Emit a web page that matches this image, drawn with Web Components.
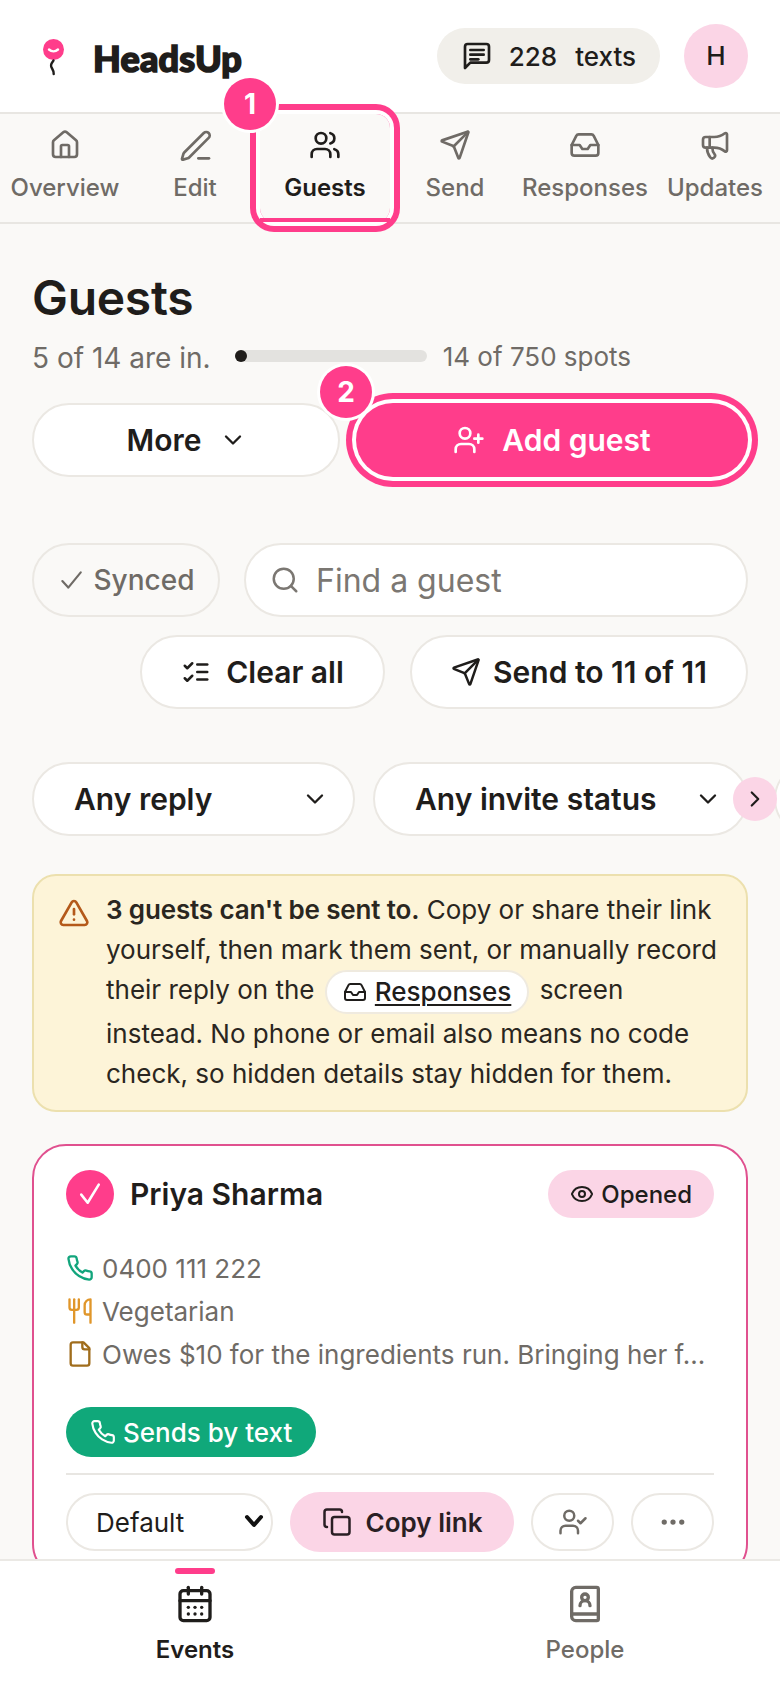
<!DOCTYPE html>
<html lang="en">
<head>
<meta charset="utf-8">
<title>HeadsUp Guests</title>
<style>
html,body{margin:0;padding:0;background:#faf9f7;}
body{font-family:Inter,"Liberation Sans",sans-serif;color:#1f1d1b;-webkit-font-smoothing:antialiased;}
</style>
</head>
<body>
<hu-app>
  <hu-header slot="top" texts="228" initial="H"></hu-header>
  <hu-tabs slot="top">
    <hu-tab icon="house">Overview</hu-tab>
    <hu-tab icon="pen">Edit</hu-tab>
    <hu-tab icon="users" active step="1">Guests</hu-tab>
    <hu-tab icon="send">Send</hu-tab>
    <hu-tab icon="inbox">Responses</hu-tab>
    <hu-tab icon="megaphone">Updates</hu-tab>
  </hu-tabs>

  <hu-summary title="Guests" in="5 of 14 are in." spots="14 of 750 spots"></hu-summary>

  <hu-row class="actions">
    <hu-button style="width:308px;padding-left:2px" trail="chevron-down">More</hu-button>
    <hu-button variant="primary" style="width:392px;gap:17px" icon="user-plus" step="2">Add guest</hu-button>
  </hu-row>

  <hu-row class="tools">
    <hu-button variant="ghost" style="width:188px" icon="tick2">Synced</hu-button>
    <hu-search style="width:504px">Find a guest</hu-search>
  </hu-row>
  <hu-row class="bulk">
    <hu-button style="width:245px;gap:15px" icon="list-checks">Clear all</hu-button>
    <hu-button style="width:338px" icon="send">Send to 11 of 11</hu-button>
  </hu-row>

  <hu-filters>
    <hu-filter style="width:323px">Any reply</hu-filter>
    <hu-filter style="width:375px">Any invite status</hu-filter>
    <hu-filter class="next" style="width:240px" aria-hidden="true"></hu-filter>
  </hu-filters>

  <hu-alert><b>3 guests can't be sent to.</b> <span>Copy or share their link</span> <span>yourself, then mark them sent, or manually record</span> <span>their reply on the</span> <hu-link icon="inbox">Responses</hu-link> <span>screen</span> <span>instead. No phone or email also means no code</span> <span>check, so hidden details stay hidden for them.</span></hu-alert>

  <hu-guest-card name="Priya Sharma" status="Opened">
    <hu-detail icon="phone" color="#12a57c">0400 111 222</hu-detail>
    <hu-detail icon="utensils" color="#e0962a">Vegetarian</hu-detail>
    <hu-detail icon="file" color="#a06d1c">Owes $10 for the ingredients run. Bringing her f...</hu-detail>
  </hu-guest-card>

  <hu-bottom-nav slot="bottom">
    <hu-nav-item icon="calendar" active>Events</hu-nav-item>
    <hu-nav-item icon="book">People</hu-nav-item>
  </hu-bottom-nav>
</hu-app>

<script>
const ICONS={
house:'<path d="M15 21v-8a1 1 0 0 0-1-1h-4a1 1 0 0 0-1 1v8"/><path d="M3 10a2 2 0 0 1 .709-1.528l7-5.999a2 2 0 0 1 2.582 0l7 5.999A2 2 0 0 1 21 10v9a2 2 0 0 1-2 2H5a2 2 0 0 1-2-2z"/>',
pen:'<path d="M14.5 22h8"/><path transform="translate(-1.4 -1.4) scale(1.22)" stroke-width="1.65" d="M16.376 3.622a1 1 0 0 1 3.002 3.002L7.368 18.635a2 2 0 0 1-.855.506l-2.872.838a.5.5 0 0 1-.62-.62l.838-2.872a2 2 0 0 1 .506-.854z"/>',
users:'<path d="M16 21v-2a4 4 0 0 0-4-4H6a4 4 0 0 0-4 4v2"/><circle cx="9" cy="7" r="4"/><path d="M22 21v-2a4 4 0 0 0-3-3.87"/><path d="M16 3.13a4 4 0 0 1 0 7.75"/>',
send:'<path d="M14.536 21.686a.5.5 0 0 0 .937-.024l6.5-19a.496.496 0 0 0-.635-.635l-19 6.5a.5.5 0 0 0-.024.937l7.93 3.18a2 2 0 0 1 1.112 1.11z"/><path d="m21.854 2.147-10.94 10.939"/>',
inbox:'<polyline points="22 12 16 12 14 15 10 15 8 12 2 12"/><path d="M5.45 5.11 2 12v6a2 2 0 0 0 2 2h16a2 2 0 0 0 2-2v-6l-3.45-6.89A2 2 0 0 0 16.76 4H7.24a2 2 0 0 0-1.79 1.11z"/>',
megaphone:'<path d="M11 6a13 13 0 0 0 8.4-2.8A1 1 0 0 1 21 4v12a1 1 0 0 1-1.6.8A13 13 0 0 0 11 14H5a2 2 0 0 1-2-2V8a2 2 0 0 1 2-2z"/><path d="M6 14a12 12 0 0 0 2.4 7.2 2 2 0 0 0 3.2-2.4A8 8 0 0 1 10 14"/><path d="M8 6v8"/>',
message:'<path d="M21 15a2 2 0 0 1-2 2H7l-4 4V5a2 2 0 0 1 2-2h14a2 2 0 0 1 2 2z"/><path d="M7 7.5h10"/><path d="M7 11h10"/><path d="M7 14.5h6"/>',
'chevron-down':'<path d="m6 9 6 6 6-6"/>',
'chevron-right':'<path d="m9 18 6-6-6-6"/>',
tick:'<path d="M4.5 12.5 10 19.5 19.5 4"/>',
tick2:'<path d="M21 5 9.5 19 4 13"/>',
search:'<path d="m21 21-4.34-4.34"/><circle cx="11" cy="11" r="8"/>',
'list-checks':'<path d="m3 17 2 2 4-4"/><path d="m3 7 2 2 4-4"/><path d="M13 6h8"/><path d="M13 12h8"/><path d="M13 18h8"/>',
'user-plus':'<path d="M16 21v-2a4 4 0 0 0-4-4H6a4 4 0 0 0-4 4v2"/><circle cx="9" cy="7" r="4"/><line x1="19" x2="19" y1="8" y2="14"/><line x1="22" x2="16" y1="11" y2="11"/>',
'user-check':'<path d="M16 21v-2a4 4 0 0 0-4-4H6a4 4 0 0 0-4 4v2"/><circle cx="9" cy="7" r="4"/><polyline points="16 11 18 13 22 9"/>',
alert:'<path d="m21.73 18-8-14a2 2 0 0 0-3.48 0l-8 14A2 2 0 0 0 4 21h16a2 2 0 0 0 1.73-3"/><path d="M12 9v4"/><path d="M12 17h.01"/>',
eye:'<path d="M2.062 12.348a1 1 0 0 1 0-.696 10.75 10.75 0 0 1 19.876 0 1 1 0 0 1 0 .696 10.75 10.75 0 0 1-19.876 0"/><circle cx="12" cy="12" r="3"/>',
phone:'<path d="M22 16.92v3a2 2 0 0 1-2.18 2 19.79 19.79 0 0 1-8.63-3.07 19.5 19.5 0 0 1-6-6 19.79 19.79 0 0 1-3.07-8.67A2 2 0 0 1 4.11 2h3a2 2 0 0 1 2 1.72 12.84 12.84 0 0 0 .7 2.81 2 2 0 0 1-.45 2.11L8.09 9.91a16 16 0 0 0 6 6l1.27-1.27a2 2 0 0 1 2.11-.45 12.84 12.84 0 0 0 2.81.7A2 2 0 0 1 22 16.92z"/>',
utensils:'<path d="M3 2v7c0 1.1.9 2 2 2h4a2 2 0 0 0 2-2V2"/><path d="M7 2v20"/><path d="M21 15V2a5 5 0 0 0-5 5v6c0 1.1.9 2 2 2h3Zm0 0v7"/>',
file:'<path d="M15 2H6a2 2 0 0 0-2 2v16a2 2 0 0 0 2 2h12a2 2 0 0 0 2-2V7Z"/><path d="M14 2v4a2 2 0 0 0 2 2h4"/>',
copy:'<rect width="14" height="14" x="8" y="8" rx="2" ry="2"/><path d="M4 16c-1.1 0-2-.9-2-2V4c0-1.1.9-2 2-2h10c1.1 0 2 .9 2 2"/>',
dots:'<circle cx="12" cy="12" r="1"/><circle cx="19" cy="12" r="1"/><circle cx="5" cy="12" r="1"/>',
calendar:'<path d="M8 2v4"/><path d="M16 2v4"/><rect width="18" height="18" x="3" y="4" rx="2"/><path d="M3 10h18"/><path d="M8 14h.01"/><path d="M12 14h.01"/><path d="M16 14h.01"/><path d="M8 18h.01"/><path d="M12 18h.01"/><path d="M16 18h.01"/>',
book:'<path d="M4 19.5v-15A2.5 2.5 0 0 1 6.5 2H19a1 1 0 0 1 1 1v18a1 1 0 0 1-1 1H6.5A2.5 2.5 0 0 1 4 19.5Z"/><path d="M4 18h16"/><path d="M15 13a3 3 0 1 0-6 0"/><circle cx="12" cy="8" r="2"/>'
};
const esc=s=>String(s==null?'':s).replace(/&/g,'&amp;').replace(/</g,'&lt;');
const svg=(name,size,sw=2,extra='')=>`<svg xmlns="http://www.w3.org/2000/svg" width="${size}" height="${size}" viewBox="0 0 24 24" fill="none" stroke="currentColor" stroke-width="${sw}" stroke-linecap="round" stroke-linejoin="round" style="flex:none;display:block;${extra}">${ICONS[name]||''}</svg>`;
class Base extends HTMLElement{
  connectedCallback(){ if(!this.shadowRoot){ this.attachShadow({mode:'open'}).innerHTML=this.render(); } }
  attr(n,d=''){ return this.hasAttribute(n)?this.getAttribute(n):d; }
}
const STEP=`.step{position:absolute;width:52px;height:52px;border-radius:50%;background:#ff3d8b;color:#fff;display:flex;align-items:center;justify-content:center;font-size:28px;font-weight:700;box-shadow:0 0 0 3px #fff;z-index:5;}`;

customElements.define('hu-app',class extends Base{render(){return `<style>
:host{display:flex;flex-direction:column;width:780px;height:1688px;overflow:hidden;position:relative;background:#faf9f7;}
main{flex:1;min-height:0;overflow:hidden;padding:46px 32px 0 32px;display:flex;flex-direction:column;}
</style><slot name="top"></slot><main><slot></slot></main><slot name="bottom"></slot>`}});

customElements.define('hu-header',class extends Base{render(){return `<style>
:host{display:flex;align-items:center;height:112px;box-sizing:content-box;background:#fff;border-bottom:2px solid #e8e6e2;padding:0 32px 0 43px;position:relative;}
.logo{display:flex;align-items:center;gap:29px;flex:1;}
.word{font-family:Lato,Inter,sans-serif;font-weight:900;font-size:36px;line-height:44px;color:#1f1d1b;-webkit-text-stroke:1.6px #1f1d1b;letter-spacing:.2px;margin-top:3px;}
.pill{display:flex;align-items:center;height:56px;background:#f1efea;border-radius:28px;padding:0 24px 0 24px;font-size:26px;font-weight:500;color:#1f1d1b;}
.pill .n{margin-left:16px;}.pill .t{margin-left:18px;}
.av{width:64px;height:64px;border-radius:50%;background:#fbd5e6;display:flex;align-items:center;justify-content:center;font-size:26px;font-weight:500;margin-left:24px;margin-top:-1px;}
</style>
<div class="logo">
<svg width="21" height="37" viewBox="0 0 21 37" style="display:block;margin-top:2px"><circle cx="10.5" cy="10.5" r="10.5" fill="#ff3d8b"/><path d="M6 10.5c2.6 2.4 6.4 2.4 9 0" stroke="#fff" stroke-width="2.4" fill="none" stroke-linecap="round"/><path d="M10.5 21.5c-3 4-3 5.5-1.4 8 1 1.6 1.6 3 1.6 5.5" stroke="#1f1d1b" stroke-width="2.4" fill="none" stroke-linecap="round"/></svg>
<span class="word">HeadsUp</span></div>
<div class="pill">${svg('message',32,2)}<span class="n">${esc(this.attr('texts'))}</span><span class="t">texts</span></div>
<div class="av">${esc(this.attr('initial'))}</div>`}});

customElements.define('hu-tabs',class extends Base{render(){return `<style>
:host{display:flex;height:108px;background:#faf9f7;border-bottom:2px solid #e8e6e2;position:relative;z-index:2;}
</style><slot></slot>`}});

customElements.define('hu-tab',class extends Base{render(){const st=this.attr('step');return `<style>
:host{flex:0 0 130px;display:flex;flex-direction:column;align-items:center;box-sizing:border-box;height:108px;padding-top:15px;color:#6f6b66;font-size:24px;font-weight:500;position:relative;white-space:nowrap;}
:host([active]){color:#1f1d1b;font-weight:600;border-radius:14px;box-shadow:0 0 0 4px #fff,0 0 0 10px #ff3d8b;}
:host([active])::after{content:"";position:absolute;left:0;right:0;bottom:0;height:4px;background:#ff3d8b;}
.l{line-height:30px;margin-top:12px;}
${STEP}.step{left:-36px;top:-36px;}
</style>${svg(this.attr('icon'),32,2)}<span class="l"><slot></slot></span>${st?`<span class="step">${esc(st)}</span>`:''}`}});

customElements.define('hu-summary',class extends Base{render(){return `<style>
:host{display:block;}
h1{margin:0;font-size:48px;line-height:56px;font-weight:600;letter-spacing:-.3px;color:#1f1d1b;}
.r{display:flex;align-items:center;height:34px;margin-top:13px;color:#6f6b66;}
.a{font-size:28px;margin-top:4px;}
.bar{width:192px;height:12px;border-radius:6px;background:#e3e2df;margin:0 16px 0 24px;position:relative;}
.bar i{position:absolute;left:0;top:0;width:12px;height:12px;border-radius:50%;background:#1f1d1b;}
.b{font-size:26px;}
</style><h1>${esc(this.attr('title'))}</h1><div class="r"><span class="a">${esc(this.attr('in'))}</span><span class="bar"><i></i></span><span class="b">${esc(this.attr('spots'))}</span></div>`}});

customElements.define('hu-row',class extends Base{render(){return `<style>
:host{display:flex;flex:none;gap:16px;}
:host(.actions){margin-top:30px;}
:host(.tools){margin-top:66px;gap:24px;}
:host(.bulk){margin-top:18px;gap:25px;justify-content:flex-end;}
</style><slot></slot>`}});

customElements.define('hu-button',class extends Base{render(){const ic=this.attr('icon'),tr=this.attr('trail'),st=this.attr('step');
 const big=this.attr('variant')==='ghost'?26:(this.attr('variant')==='primary'?32:30);
 return `<style>
:host{display:flex;align-items:center;justify-content:center;gap:12px;height:74px;box-sizing:border-box;border:2px solid #ebe8e3;border-radius:37px;background:#fff;color:#1f1d1b;font-size:30px;font-weight:600;position:relative;white-space:nowrap;flex:none;}
:host([variant=primary]){background:#ff3d8b;color:#fff;border:0;box-shadow:0 0 0 4px #fff,0 0 0 10px #ff3d8b;}
:host([variant=ghost]){background:transparent;color:#6f6b66;font-weight:500;font-size:28px;gap:10px;}
.tr{margin-left:6px;}
${STEP}.step{left:-36px;top:-37px;}
</style>${ic?svg(ic,big,2):''}<slot></slot>${tr?`<span class="tr">${svg(tr,28,2)}</span>`:''}${st?`<span class="step">${esc(st)}</span>`:''}`}});

customElements.define('hu-search',class extends Base{render(){return `<style>
:host{display:flex;align-items:center;flex:none;height:74px;box-sizing:border-box;border:2px solid #ebe8e3;border-radius:37px;background:#fff;padding-left:24px;color:#7b7772;font-size:32px;gap:16px;}
</style>${svg('search',30,2)}<span><slot></slot></span>`}});

customElements.define('hu-filters',class extends Base{render(){return `<style>
:host{display:block;position:relative;margin-top:53px;flex:none;}
.s{display:flex;gap:18px;width:1000px;}
.go{position:absolute;left:701px;top:15px;width:44px;height:44px;border-radius:50%;background:#fbd5e6;color:#1f1d1b;display:flex;align-items:center;justify-content:center;z-index:2;}
::slotted(.next){margin-left:8px;}
</style><div class="s"><slot></slot></div><span class="go">${svg('chevron-right',26,2)}</span>`}});

customElements.define('hu-filter',class extends Base{render(){const t=this.textContent.trim();return `<style>
:host{display:flex;align-items:center;justify-content:space-between;flex:none;box-sizing:border-box;height:74px;border:2px solid #ebe8e3;border-radius:37px;background:#fff;padding:0 24px 0 40px;font-size:30px;font-weight:600;color:#1f1d1b;white-space:nowrap;}
</style><span><slot></slot></span>${t?svg('chevron-down',28,2):''}`}});

customElements.define('hu-alert',class extends Base{render(){return `<style>
:host{display:flex;flex:none;gap:16px;margin-top:38px;box-sizing:border-box;height:238px;padding:14px 24px;background:#fdf4d8;border:2px solid #ece0ae;border-radius:24px;color:#2a2620;font-size:26px;line-height:40px;}
svg{margin-top:7px;color:#b4591a;}
::slotted(b){font-weight:600;letter-spacing:-.15px;}
</style>${svg('alert',32,2)}<div><slot></slot></div>`}});

customElements.define('hu-link',class extends Base{render(){return `<style>
:host{display:inline-flex;align-items:center;gap:8px;height:44px;box-sizing:border-box;padding:0 16px;margin:0 3px;border:2px solid #efeadf;border-radius:22px;background:#fff;vertical-align:middle;color:#1f1d1b;font-weight:500;line-height:38px;}
span{text-decoration:underline;text-underline-offset:3px;text-decoration-thickness:2px;}
</style>${svg(this.attr('icon'),24,2)}<span><slot></slot></span>`}});

customElements.define('hu-detail',class extends Base{render(){return `<style>
:host{display:flex;align-items:center;gap:8px;height:36px;font-size:26px;color:#6f6b66;min-width:0;}
.i{color:${this.attr('color')};flex:none;display:block;width:28px;height:28px;}
span.t{white-space:nowrap;min-width:0;}
</style><span class="i">${svg(this.attr('icon'),28,2)}</span><span class="t"><slot></slot></span>`}});

customElements.define('hu-guest-card',class extends Base{render(){return `<style>
:host{display:block;flex:none;margin-top:32px;box-sizing:border-box;background:#fff;border:2px solid #e0518f;border-radius:34px;padding:24px 32px 24px;}
.h{display:flex;align-items:center;height:48px;}
.c{width:48px;height:48px;border-radius:50%;background:#ff3d8b;color:#fff;display:flex;align-items:center;justify-content:center;flex:none;}
.n{font-size:30px;font-weight:600;margin-left:16px;flex:1;color:#1f1d1b;}
.st{display:flex;align-items:center;gap:7px;height:48px;padding:0 22px;border-radius:24px;background:#fbd5e6;color:#1f1d1b;font-size:24px;font-weight:500;}
.d{display:flex;flex-direction:column;gap:7px;margin-top:32px;}
.sb{display:inline-flex;align-items:center;gap:7px;height:50px;padding:0 24px;border-radius:25px;background:#10a87a;color:#fff;font-size:26px;font-weight:500;margin-top:35px;}
hr{border:0;height:2px;background:#e8e6e2;margin:16px 0 17px;}
.a{display:flex;align-items:center;gap:17px;height:60px;}
.sel{position:relative;flex:none;width:207px;height:58px;}
select{appearance:none;-webkit-appearance:none;width:100%;height:100%;box-sizing:border-box;border:2px solid #ebe8e3;border-radius:29px;background:#fff;font:400 26px Inter,"Liberation Sans",sans-serif;color:#1f1d1b;padding:0 0 0 28px;}
.sel svg{position:absolute;right:8px;top:17px;pointer-events:none;}
.cp{display:flex;align-items:center;justify-content:center;gap:14px;width:224px;height:60px;border-radius:30px;background:#fbd5e6;font-size:26px;font-weight:600;color:#2a1f24;flex:none;}
.ib{display:flex;align-items:center;justify-content:center;width:83px;height:58px;box-sizing:border-box;border:2px solid #ebe8e3;border-radius:29px;color:#6f6b66;flex:none;}
</style>
<div class="h"><span class="c">${svg('tick',28,2.2)}</span><span class="n">${esc(this.attr('name'))}</span><span class="st">${svg('eye',24,2)}${esc(this.attr('status'))}</span></div>
<div class="d"><slot></slot></div>
<div class="sb">${svg('phone',26,2)}Sends by text</div>
<hr>
<div class="a"><div class="sel"><select aria-label="Template"><option>Default</option></select><svg width="22" height="22" viewBox="0 0 22 22" fill="none" stroke="#111" stroke-width="4" stroke-linecap="round" stroke-linejoin="round"><path d="m4 7 7 8 7-8"/></svg></div>
<div class="cp">${svg('copy',30,2)}Copy link</div>
<div class="ib">${svg('user-check',30,2)}</div>
<div class="ib">${svg('dots',30,2.2)}</div></div>`}});

customElements.define('hu-bottom-nav',class extends Base{render(){return `<style>
:host{display:flex;flex:none;height:129px;box-sizing:border-box;background:#fff;border-top:2px solid #ebe9e5;position:relative;z-index:3;}
</style><slot></slot>`}});

customElements.define('hu-nav-item',class extends Base{render(){const a=this.hasAttribute('active');return `<style>
:host{flex:0 0 390px;display:flex;flex-direction:column;align-items:center;padding-top:7px;box-sizing:border-box;color:#6f6b66;font-size:24px;font-weight:500;}
:host([active]){color:#1f1d1b;font-weight:600;}
.b{width:40px;height:6px;border-radius:3px;background:${a?'#ff3d8b':'transparent'};margin-bottom:10px;}
.l{line-height:30px;margin-top:11px;}
</style><span class="b"></span>${svg(this.attr('icon'),40,2)}<span class="l"><slot></slot></span>`}});
</script>
</body>
</html>
